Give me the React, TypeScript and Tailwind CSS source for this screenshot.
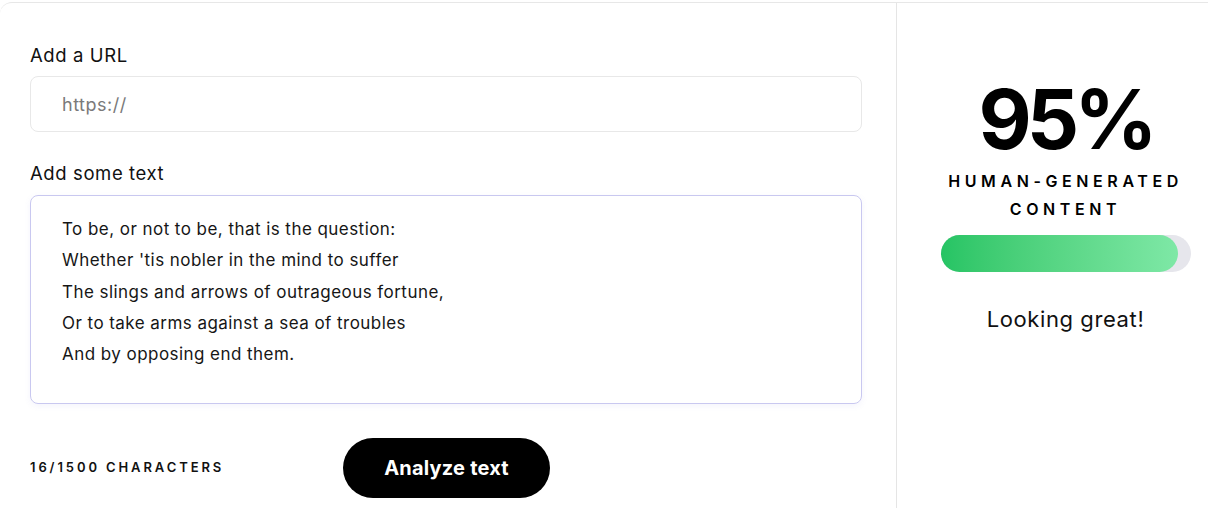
const lines = [
  "To be, or not to be, that is the question:",
  "Whether 'tis nobler in the mind to suffer",
  "The slings and arrows of outrageous fortune,",
  "Or to take arms against a sea of troubles",
  "And by opposing end them.",
];

export default function App() {
  return (
    <div className="h-[508px] w-[1208px] bg-white font-['Inter','Noto_Sans',sans-serif] text-black overflow-hidden">
      <div className="mt-[2px] flex h-full rounded-tl-xl border-t border-[#e7e7e7]">
        <div className="w-[897px] border-r border-[#e5e5e5] pl-[30px] pr-[34px] pt-[40px]">
          <label className="block text-[18.5px] leading-[24px] tracking-[0.6px] text-[#111]">Add a URL</label>
          <div className="mt-[9px] flex h-[56px] items-center rounded-lg border border-[#e8e8e8] px-[31px]">
            <span className="text-[18px] tracking-[0.5px] text-[#7a7a7a]">https://</span>
          </div>

          <label className="mt-[29px] block text-[18.5px] leading-[24px] tracking-[0.6px] text-[#111]">
            Add some text
          </label>
          <div className="mt-[10px] h-[209px] rounded-lg border border-[#c9c8f0] px-[31px] pt-[18px] shadow-[0_2px_6px_rgba(120,120,220,0.08)]">
            {lines.map((l) => (
              <p key={l} className="text-[17px] leading-[31.3px] tracking-[0.45px] text-[#161616]">
                {l}
              </p>
            ))}
          </div>

          <div className="mt-[34px] flex items-center">
            <span className="w-[313px] text-[13px] font-semibold tracking-[2.9px] text-[#111]">
              16/1500 CHARACTERS
            </span>
            <button className="h-[60px] w-[207px] rounded-full bg-black text-[20px] font-bold tracking-[0.2px] text-white">
              Analyze text
            </button>
          </div>
        </div>

        <div className="flex flex-1 flex-col items-center pl-[26px] pt-[69px]">
          <div className="text-[82px] font-bold leading-[95px] tracking-[-5px]">95%</div>
          <div className="text-center text-[16px] font-semibold leading-[28px] tracking-[4.6px]">
            HUMAN-GENERATED
            <br />
            CONTENT
          </div>
          <div className="mt-[12px] h-[37px] w-[250px] rounded-full bg-[#e6e6ec]">
            <div className="h-full w-[95%] rounded-full bg-gradient-to-r from-[#25c464] to-[#7ee8a6]" />
          </div>
          <div className="mt-[31px] text-[22px] tracking-[0.6px] text-[#111]">Looking great!</div>
        </div>
      </div>
    </div>
  );
}
